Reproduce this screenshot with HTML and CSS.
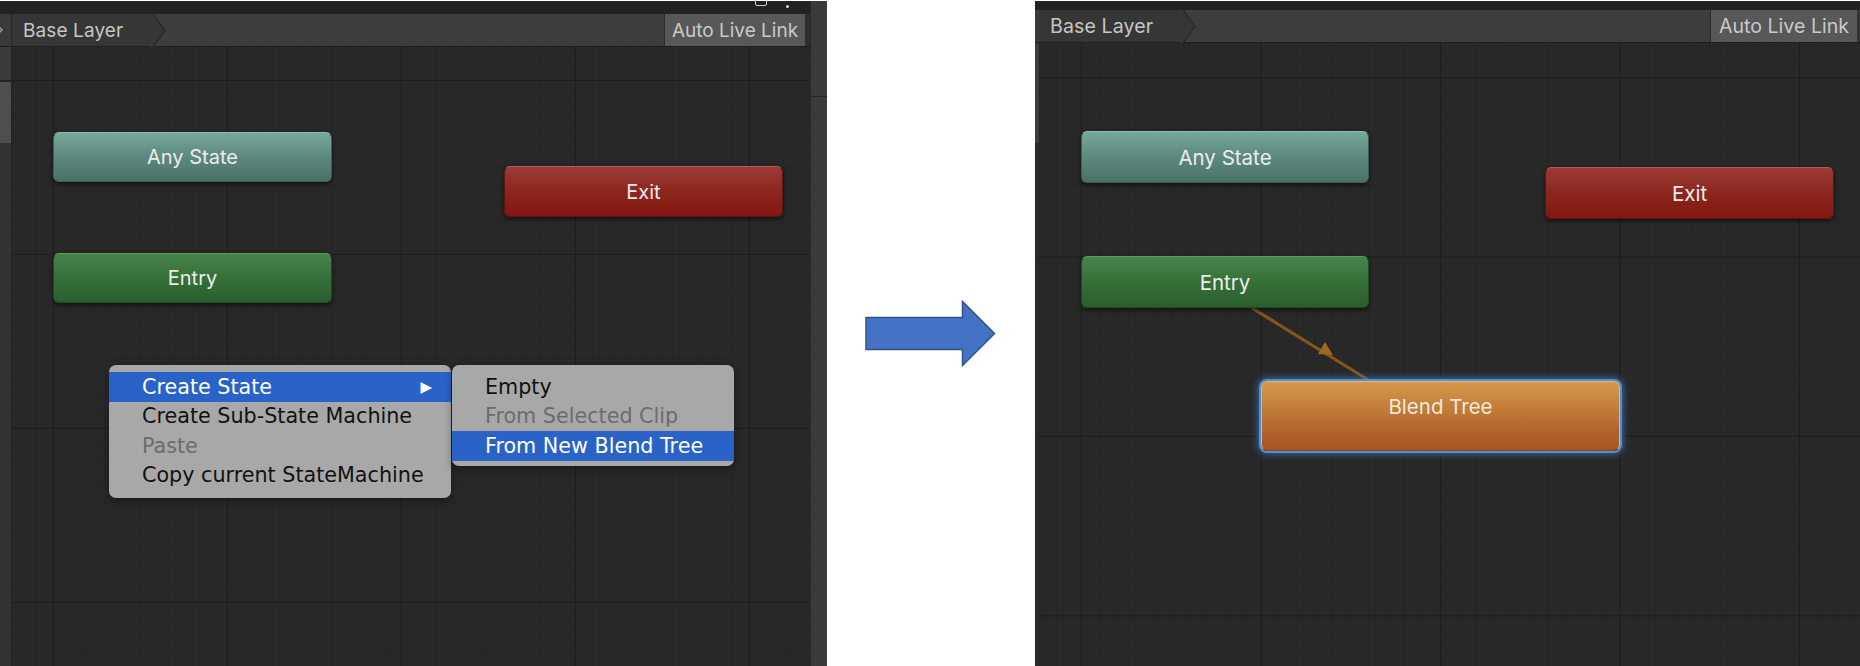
FILE: index.html
```html
<!DOCTYPE html>
<html>
<head>
<meta charset="utf-8">
<link rel="stylesheet" href="styles.css">
</head>
<body>
  <section class="panel panel-left">
    <div class="lcol">
      <div class="lcol-top"></div>
      <div class="lcol-bar">
        <svg class="stub-chev" width="8" height="12" viewBox="0 0 8 12"><path d="M0 1 L5 6 L0 11" fill="none" stroke="#9a9a9a" stroke-width="1.5"/></svg>
      </div>
      <div class="lcol-scroll"><div class="thumb"></div></div>
    </div>
    <div class="main">
      <div class="topstrip">
        <span class="win-max"></span>
        <span class="win-dot"></span>
      </div>
      <div class="bar">
        <div class="crumb">
          <span class="crumb-text">Base Layer</span>
          <svg class="crumb-chev" width="16" height="33" viewBox="0 0 16 33"><path d="M0 0 L3 0 L15 16.5 L3 33 L0 33 Z" fill="#363636"/><path d="M3 0 L15 16.5 L3 33" fill="none" stroke="#262626" stroke-width="1.2"/></svg>
        </div>
        <div class="bar-fill"></div>
        <div class="live-btn">Auto Live Link</div>
        <div class="bar-end"></div>
      </div>
      <div class="canvas grid-left">
        <div class="node any" style="left:41px;top:85px;width:279px;height:50px">Any State</div>
        <div class="node exit" style="left:492px;top:119px;width:279px;height:51px">Exit</div>
        <div class="node entry" style="left:41px;top:206px;width:279px;height:50px">Entry</div>

        <div class="menu main-menu">
          <div class="mi hl"><span>Create State</span><span class="sub-arrow">&#9654;</span></div>
          <div class="mi">Create Sub-State Machine</div>
          <div class="mi dis">Paste</div>
          <div class="mi">Copy current StateMachine</div>
        </div>
        <div class="menu sub-menu">
          <div class="mi">Empty</div>
          <div class="mi dis">From Selected Clip</div>
          <div class="mi hl">From New Blend Tree</div>
        </div>
      </div>
    </div>
    <div class="rcol"><div class="rcol-top"></div></div>
  </section>

  <div class="gap">
    <svg class="big-arrow" width="132" height="68" viewBox="0 0 132 68"><path d="M1 17.5 H97.5 V1.5 L129.5 33.5 L97.5 65.5 V49.5 H1 Z" fill="#4472c4" stroke="#2f528f" stroke-width="1.5"/></svg>
  </div>

  <section class="panel panel-right">
    <div class="lcol lcol-thin">
      <div class="lcol-top r"></div>
      <div class="lcol-bar r"></div>
      <div class="lcol-scroll r"><div class="thumb r"></div></div>
    </div>
    <div class="main">
      <div class="topstrip r"></div>
      <div class="bar">
        <div class="crumb r">
          <span class="crumb-text r">Base Layer</span>
          <svg class="crumb-chev" width="16" height="33" viewBox="0 0 16 33"><path d="M0 0 L3 0 L15 16.5 L3 33 L0 33 Z" fill="#363636"/><path d="M3 0 L15 16.5 L3 33" fill="none" stroke="#262626" stroke-width="1.2"/></svg>
        </div>
        <div class="bar-fill"></div>
        <div class="live-btn r">Auto Live Link</div>
        <div class="bar-end r"></div>
      </div>
      <div class="canvas grid-right">
        <svg class="wires" width="821" height="622" viewBox="0 0 821 622">
          <line x1="213" y1="265" x2="331" y2="338" stroke="#835719" stroke-width="3"/>
          <polygon points="294,312 279,311 286,299" fill="#9b6a22"/>
        </svg>
        <div class="node any big" style="left:42px;top:88px;width:288px;height:52px">Any State</div>
        <div class="node exit big" style="left:506px;top:124px;width:289px;height:52px">Exit</div>
        <div class="node entry big" style="left:42px;top:213px;width:288px;height:52px">Entry</div>
        <div class="node blend" style="left:222px;top:338px;width:359px;height:70px">Blend Tree</div>
      </div>
    </div>
  </section>
</body>
</html>
```

FILE: styles.css
```css
* { box-sizing: border-box; }

html, body {
  margin: 0;
  padding: 0;
}

body {
  width: 1860px;
  height: 666px;
  overflow: hidden;
  background: #ffffff;
  display: flex;
  font-family: Inter, "Noto Sans", sans-serif;
}

.panel {
  height: 665px;
  margin-top: 1px;
  display: flex;
  background: #282828;
}

.panel-left { width: 827px; }
.panel-right { width: 825px; }

.gap {
  width: 208px;
  display: flex;
  align-items: center;
  justify-content: center;
  padding-top: 1px;
}

/* left column (scroll gutter) */
.lcol {
  width: 12px;
  display: flex;
  flex-direction: column;
  flex: none;
}
.lcol-thin { width: 4px; }

.lcol-top { height: 13px; background: #222222; }
.lcol-top.r { height: 9px; }

.lcol-bar {
  height: 33px;
  background: #3a3a3a;
  border-right: 1px solid #262626;
  border-bottom: 1px solid #1f1f1f;
  display: flex;
  align-items: center;
  overflow: hidden;
}
.lcol-bar.r { border-right: none; background: #3c3c3c; }

.stub-chev { margin-left: -3px; flex: none; }

.lcol-scroll {
  flex: 1;
  background: #333333;
  padding-top: 35px;
  border-right: 1px solid #222;
  position: relative;
}
.lcol-scroll::before {
  content: "";
  display: block;
  height: 33px;
  margin-top: -35px;
  background: #3b3b3b;
  border-bottom: 2px solid #232323;
}
.thumb {
  height: 61px;
  background: #4e4e4e;
}
.lcol-scroll.r { background: #2a2a2a; border-right: none; padding-top: 0; }
.lcol-scroll.r::before { display: none; }
.thumb.r { height: 100px; background: #3d3d3d; }

/* main column */
.main {
  flex: 1;
  display: flex;
  flex-direction: column;
  min-width: 0;
}

.topstrip {
  height: 13px;
  background: #222222;
  position: relative;
}
.topstrip.r { height: 9px; }

.win-max {
  position: absolute;
  left: 743px;
  top: -6px;
  width: 12px;
  height: 11px;
  border: 1.5px solid #cfcfcf;
  border-radius: 2px;
}
.win-dot {
  position: absolute;
  left: 774px;
  top: 4px;
  width: 3px;
  height: 3px;
  border-radius: 50%;
  background: #d8d8d8;
}

.bar {
  height: 33px;
  background: #3d3d3d;
  border-bottom: 1px solid #1e1e1e;
  display: flex;
  align-items: stretch;
}

.crumb {
  display: flex;
  align-items: stretch;
  background: #363636;
  padding-left: 11px;
  width: 138px;
  flex: none;
}
.crumb.r { width: 141px; }
.crumb-text {
  flex: 1;
  display: flex;
  align-items: center;
  color: #c6c6c6;
  font-size: 19px;
  letter-spacing: 0.1px;
  white-space: nowrap;
}
.crumb-text.r { font-size: 19.6px; }
.crumb-chev { flex: none; margin-right: -16px; position: relative; }

.bar-fill { flex: 1; }

.live-btn {
  flex: none;
  width: 141px;
  background: #585858;
  color: #c9c9c9;
  font-size: 19px;
  display: flex;
  align-items: center;
  justify-content: center;
  white-space: nowrap;
  border-left: 1px solid #2c2c2c;
}
.live-btn.r { width: 147px; font-size: 19.6px; }
.bar-end { width: 5px; flex: none; background: #2e2e2e; }
.bar-end.r { width: 3px; background: #333; }

.rcol {
  width: 17px;
  flex: none;
  background: #3a3a3a;
  border-left: 1px solid #2a2a2a;
}
.rcol-top {
  height: 96px;
  border-bottom: 1px solid #262626;
}

/* canvas with grid */
.canvas {
  flex: 1;
  position: relative;
  overflow: hidden;
}

.grid-left {
  background-color: #282828;
  background-image:
    linear-gradient(to right, #1d1d1d 0, #1d1d1d 1px, transparent 1px),
    linear-gradient(to bottom, #1d1d1d 0, #1d1d1d 1px, transparent 1px),
    linear-gradient(to right, #242424 0, #242424 1px, transparent 1px),
    linear-gradient(to bottom, #242424 0, #242424 1px, transparent 1px);
  background-size: 174px 174px, 174px 174px, 17.4px 17.4px, 17.4px 17.4px;
  background-position: 41px 33px, 41px 33px, 6.2px 15.6px, 6.2px 15.6px;
}

.grid-right {
  background-color: #282828;
  background-image:
    linear-gradient(to right, #1d1d1d 0, #1d1d1d 1px, transparent 1px),
    linear-gradient(to bottom, #1d1d1d 0, #1d1d1d 1px, transparent 1px),
    linear-gradient(to right, #242424 0, #242424 1px, transparent 1px),
    linear-gradient(to bottom, #242424 0, #242424 1px, transparent 1px);
  background-size: 179.5px 179.5px, 179.5px 179.5px, 17.95px 17.95px, 17.95px 17.95px;
  background-position: 42px 34px, 42px 34px, 6.1px 16px, 6.1px 16px;
}

.wires {
  position: absolute;
  left: 0;
  top: 0;
}

/* state nodes */
.node {
  position: absolute;
  border-radius: 6px;
  display: flex;
  align-items: center;
  justify-content: center;
  color: #ececec;
  font-size: 20px;
  box-shadow: 0 2px 4px rgba(0, 0, 0, 0.55);
}
.node.big { font-size: 20.5px; }

.any {
  background: linear-gradient(to bottom, #78a89b 0%, #5f8b80 45%, #4a7167 100%);
  border: 1px solid #3e5f56;
  border-top-color: #8fbcb0;
}
.exit {
  background: linear-gradient(to bottom, #9c3c37 0%, #8c2820 45%, #821710 100%);
  border: 1px solid #5e1510;
  border-top-color: #b45a53;
}
.entry {
  background: linear-gradient(to bottom, #47844b 0%, #377239 45%, #2a5e2e 100%);
  border: 1px solid #214a24;
  border-top-color: #5c9b60;
}
.blend {
  background: linear-gradient(to bottom, #d7984d 0%, #c4803a 35%, #b0612a 75%, #a9551f 100%);
  border: 1px solid #e9b774;
  border-bottom-color: #8e4716;
  align-items: flex-start;
  padding-top: 12px;
  font-size: 20.5px;
  color: #f1e8de;
  box-shadow: 0 0 0 2px #4f8fd5, 0 0 7px 3px rgba(64, 130, 210, 0.75);
}

/* context menus */
.menu {
  position: absolute;
  background: #a8a8a8;
  border-radius: 7px;
  font-family: "DejaVu Sans", "Liberation Sans", sans-serif;
  font-size: 20.7px;
  color: #111111;
  box-shadow: 0 3px 8px rgba(0, 0, 0, 0.35);
}
.main-menu {
  left: 97px;
  top: 318px;
  width: 342px;
  height: 133px;
  padding-top: 7px;
}
.sub-menu {
  left: 440px;
  top: 318px;
  width: 282px;
  height: 101px;
  padding-top: 7px;
}
.mi {
  height: 29.5px;
  display: flex;
  align-items: center;
  justify-content: space-between;
  white-space: nowrap;
}
.main-menu .mi { padding: 0 19px 0 33px; }
.sub-menu .mi { padding: 0 10px 0 33px; }
.mi.hl {
  background: #2a63c8;
  color: #ffffff;
}
.mi.dis { color: #6c6c6c; }
.sub-arrow {
  font-size: 15px;
  color: #ffffff;
}
```
